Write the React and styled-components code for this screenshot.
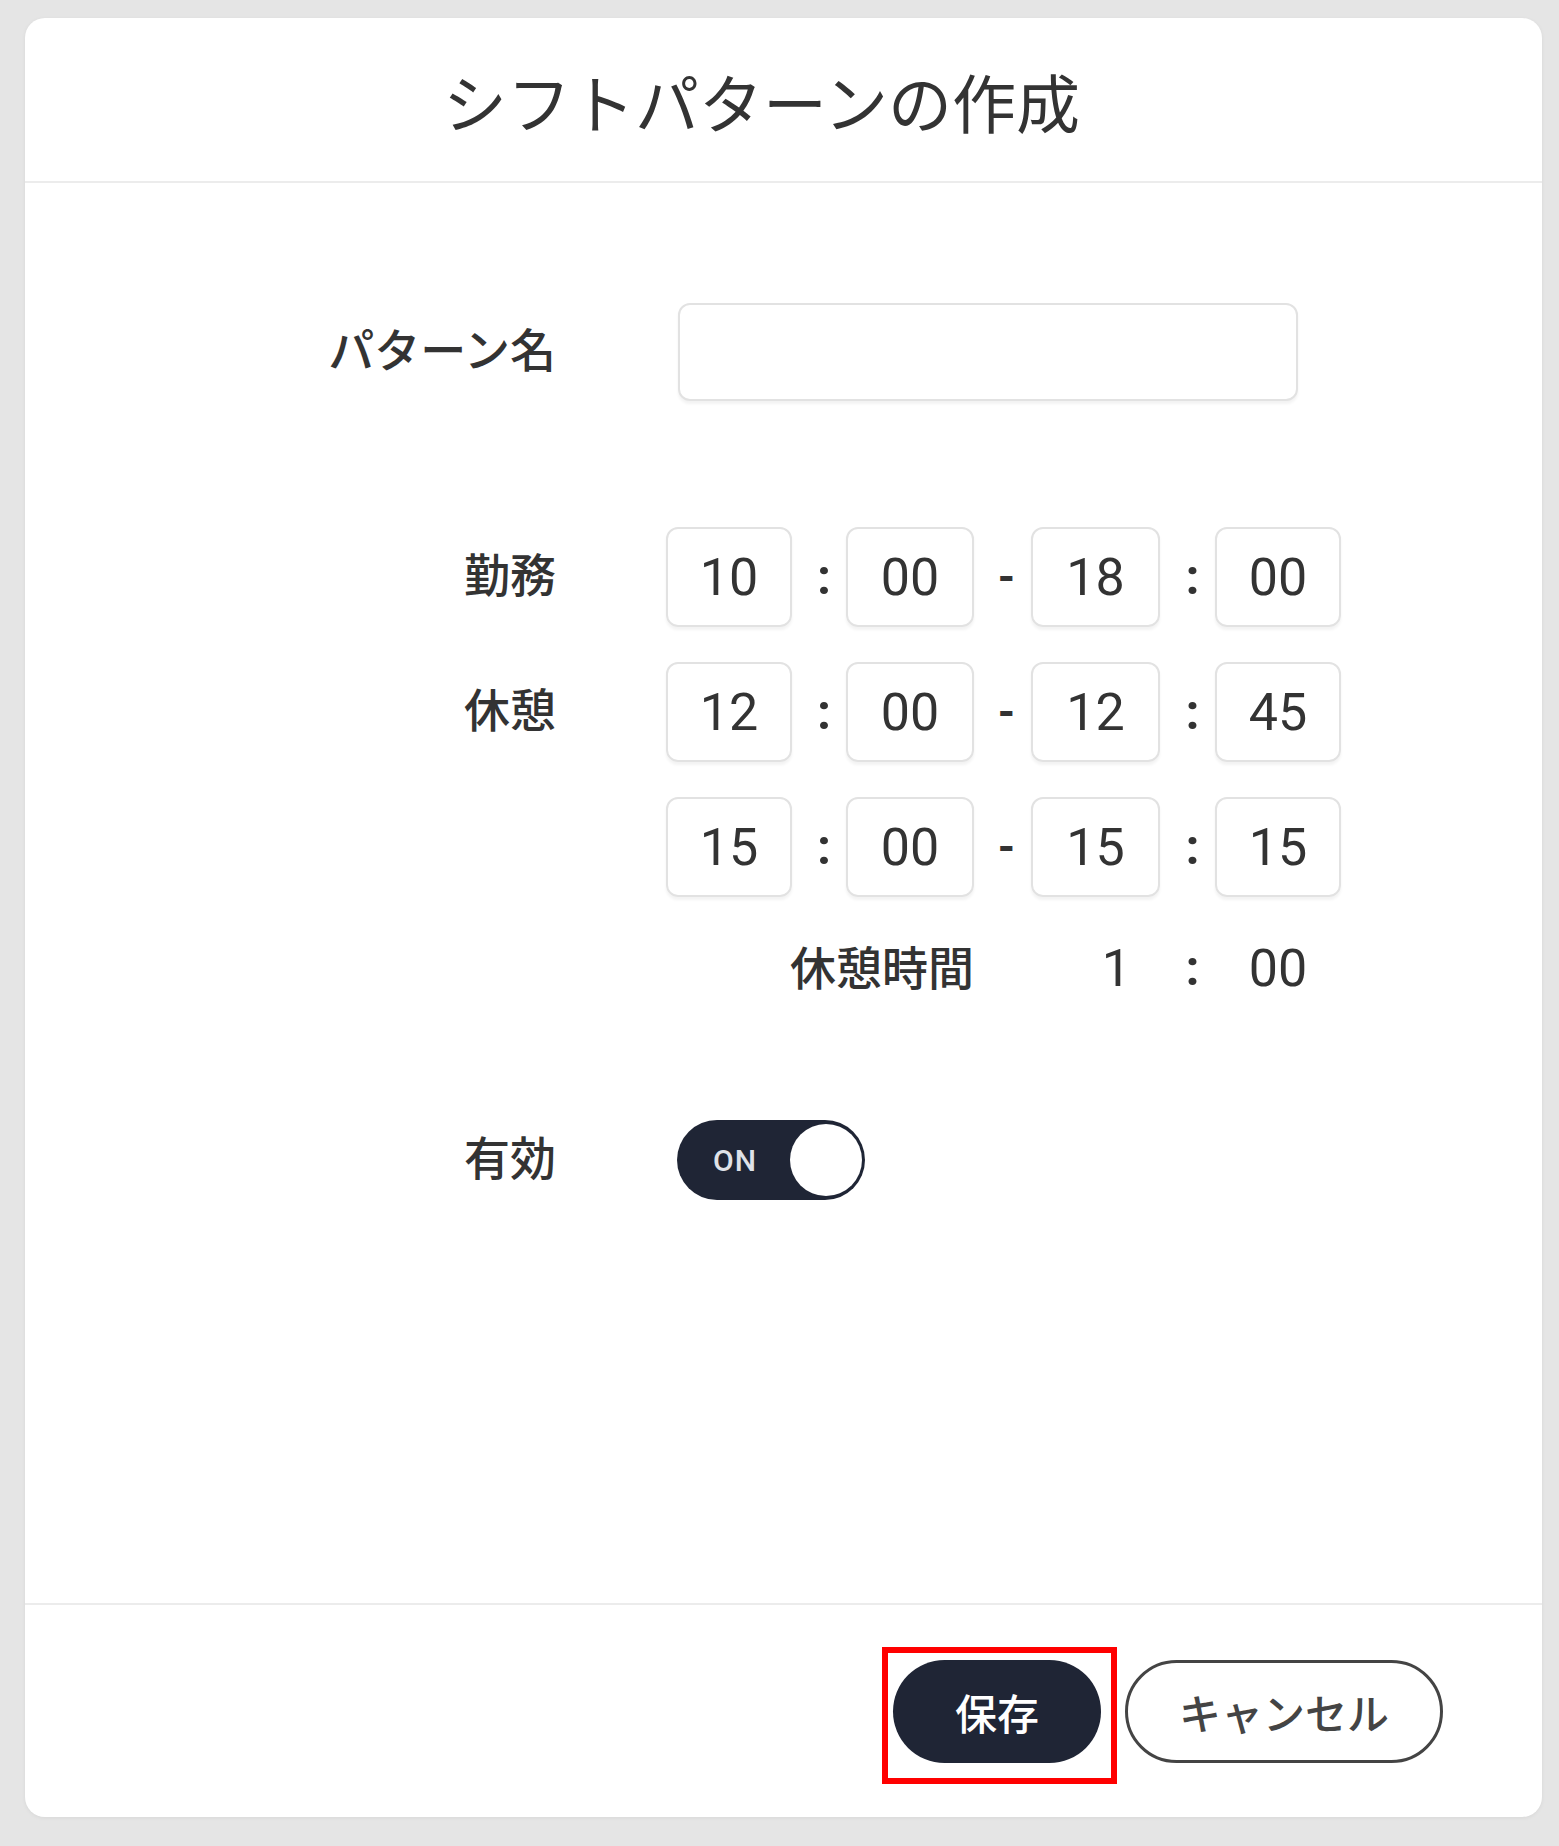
import React, { useState } from 'react'
import styled, { createGlobalStyle } from 'styled-components'

const GlobalStyle = createGlobalStyle`
  html, body {
    margin: 0;
    padding: 0;
    background: #e5e5e5;
  }
  * {
    box-sizing: border-box;
  }
`

const Page = styled.div`
  min-height: 100vh;
  padding: 18px 17px 29px 25px;
  display: flex;
  font-family: Roboto, 'Noto Sans CJK JP', sans-serif;
  color: #333;
`

const Card = styled.div`
  flex: 1;
  display: flex;
  flex-direction: column;
  background: #fff;
  border-radius: 20px;
  box-shadow: 0 1px 4px rgba(0, 0, 0, 0.06);
  overflow: hidden;
`

const Header = styled.div`
  height: 165px;
  display: flex;
  align-items: center;
  justify-content: center;
  padding-right: 44px;
  border-bottom: 2px solid #ececec;
`

const Title = styled.h1`
  margin: 0;
  font-family: 'Noto Sans CJK JP', sans-serif;
  font-size: 64px;
  font-weight: 400;
  color: #333;
`

const Body = styled.div`
  flex: 1;
  padding-top: 120px;
  display: flex;
  flex-direction: column;
`

const FieldRow = styled.div`
  display: grid;
  grid-template-columns: 531px auto;
  column-gap: 110px;
  align-items: center;
  margin-top: ${(props) => props.gap || 0}px;
`

const Label = styled.div`
  text-align: right;
  padding-bottom: 10px;
  font-family: 'Noto Sans CJK JP', sans-serif;
  font-size: 46px;
  font-weight: 500;
  color: #333;
`

const TextInput = styled.input`
  margin-left: 12px;
  width: 620px;
  height: 98px;
  border: 2px solid #e2e2e2;
  border-radius: 12px;
  box-shadow: 0 3px 3px rgba(0, 0, 0, 0.05);
  font-size: 40px;
  padding: 0 20px;
  outline: none;
`

const TimeRow = styled.div`
  display: grid;
  grid-template-columns: 126px 54px 128px 57px 129px 55px 126px;
  align-items: center;
  height: ${(props) => props.height || 100}px;
`

const TimeBox = styled.div`
  height: 100px;
  display: flex;
  align-items: center;
  justify-content: center;
  border: 2px solid #e2e2e2;
  border-radius: 12px;
  box-shadow: 0 3px 3px rgba(0, 0, 0, 0.05);
  font-size: 52px;
  color: #333;
`

const Sep = styled.div`
  grid-column: ${(props) => props.col || 'auto'};
  text-align: center;
  padding-left: ${(props) => (props.dash ? 8 : 10)}px;
  font-size: ${(props) => (props.dash ? 44 : 50)}px;
  font-weight: 700;
  color: #333;
  line-height: 1;
`

const SumLabel = styled.div`
  grid-column: 1 / 4;
  text-align: right;
  padding-bottom: 6px;
  font-family: 'Noto Sans CJK JP', sans-serif;
  font-size: 46px;
  font-weight: 500;
`

const SumValue = styled.div`
  grid-column: ${(props) => props.col};
  font-size: 52px;
  text-align: ${(props) => (props.right ? 'right' : 'center')};
  padding-right: ${(props) => (props.right ? 29 : 0)}px;
`

const Toggle = styled.button`
  position: relative;
  margin-left: 11px;
  width: 188px;
  height: 80px;
  border: none;
  border-radius: 40px;
  background: ${(props) => (props.on ? '#1f2535' : '#c9ccd3')};
  padding: 0 0 0 36px;
  display: flex;
  align-items: center;
  cursor: pointer;
  font-family: Roboto, sans-serif;
  font-size: 30px;
  font-weight: 500;
  letter-spacing: 1px;
  color: #dfe2e8;
`

const Knob = styled.span`
  position: absolute;
  top: 4px;
  right: 3px;
  width: 72px;
  height: 72px;
  border-radius: 50%;
  background: #fff;
`

const Footer = styled.div`
  height: 214px;
  border-top: 2px solid #ececec;
  display: flex;
  align-items: center;
  justify-content: flex-end;
  gap: 24px;
  padding-right: 99px;
`

const Marked = styled.div`
  position: relative;
  display: flex;

  &::after {
    content: '';
    position: absolute;
    top: -13px;
    left: -11px;
    right: -16px;
    bottom: -21px;
    border: 6px solid #ff0000;
    pointer-events: none;
  }
`

const Button = styled.button`
  height: 103px;
  width: ${(props) => (props.primary ? 208 : 318)}px;
  border-radius: 52px;
  border: ${(props) => (props.primary ? 'none' : '3px solid #444')};
  background: ${(props) => (props.primary ? '#1f2535' : '#fff')};
  color: ${(props) => (props.primary ? '#fff' : '#444')};
  font-family: 'Noto Sans CJK JP', sans-serif;
  font-size: 42px;
  font-weight: 500;
  cursor: pointer;
`

const times = [
  { label: '勤務', values: ['10', '00', '18', '00'] },
  { label: '休憩', values: ['12', '00', '12', '45'] },
  { label: '', values: ['15', '00', '15', '15'] },
]

const App = () => {
  const [active, setActive] = useState(true)

  return (
    <Page>
      <GlobalStyle />
      <Card>
        <Header>
          <Title>シフトパターンの作成</Title>
        </Header>
        <Body>
          <FieldRow>
            <Label>パターン名</Label>
            <TextInput type="text" />
          </FieldRow>

          {times.map((t, i) => (
            <FieldRow key={i} gap={i === 0 ? 126 : 35}>
              <Label>{t.label}</Label>
              <TimeRow>
                <TimeBox>{t.values[0]}</TimeBox>
                <Sep>:</Sep>
                <TimeBox>{t.values[1]}</TimeBox>
                <Sep dash>-</Sep>
                <TimeBox>{t.values[2]}</TimeBox>
                <Sep>:</Sep>
                <TimeBox>{t.values[3]}</TimeBox>
              </TimeRow>
            </FieldRow>
          ))}

          <FieldRow gap={35}>
            <Label />
            <TimeRow height={60}>
              <SumLabel>休憩時間</SumLabel>
              <SumValue col={5} right>1</SumValue>
              <Sep col={6}>:</Sep>
              <SumValue col={7}>00</SumValue>
            </TimeRow>
          </FieldRow>

          <FieldRow gap={128}>
            <Label>有効</Label>
            <div>
              <Toggle on={active} onClick={() => setActive(!active)}>
                {active ? 'ON' : 'OFF'}
                <Knob />
              </Toggle>
            </div>
          </FieldRow>
        </Body>
        <Footer>
          <Marked>
            <Button primary>保存</Button>
          </Marked>
          <Button>キャンセル</Button>
        </Footer>
      </Card>
    </Page>
  )
}

export default App
